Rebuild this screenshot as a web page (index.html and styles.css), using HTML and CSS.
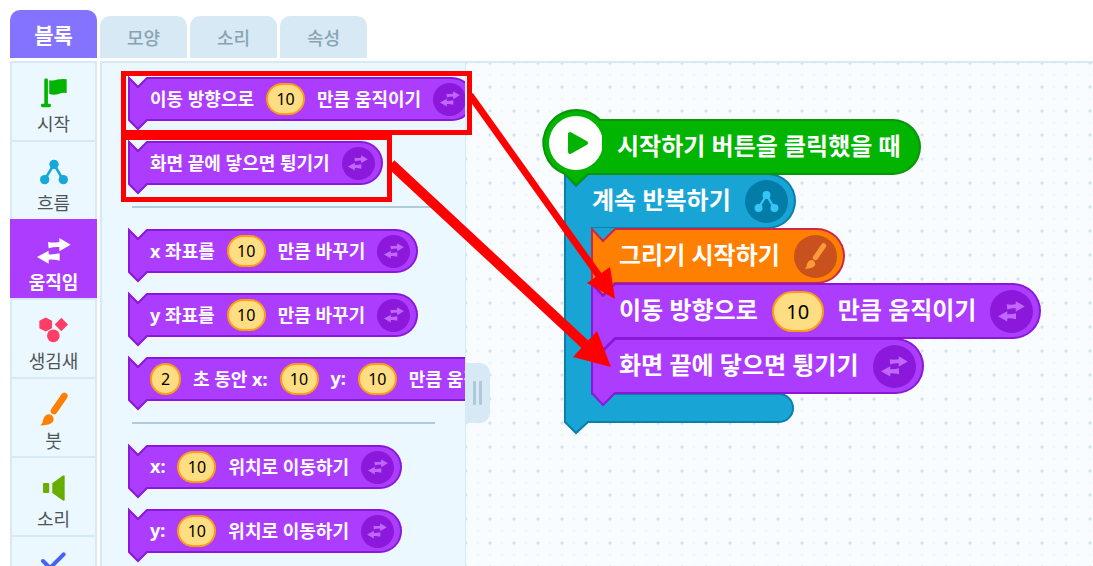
FILE: index.html
```html
<!DOCTYPE html>
<html lang="ko">
<head>
    <meta charset="UTF-8">
    <meta name="viewport" content="width=device-width, initial-scale=1.0">
    <title>블록 코딩</title>
    <link rel="stylesheet" href="styles.css">
</head>
<body>
    <!-- Shared shapes and icons -->
    <svg class="defs" aria-hidden="true">
        <symbol id="notch" viewBox="0 0 20 44" overflow="visible">
            <path d="M20 1H19L10 10L1 1V43L10 52L19 43H20"/>
        </symbol>
        <symbol id="notch-lg" viewBox="0 0 27 56" overflow="visible">
            <path d="M27 1H24L12 13L1 1V55L12 67L24 55H27"/>
        </symbol>
        <symbol id="loop-top" viewBox="0 0 27 56" overflow="visible">
            <path class="plain" d="M2 3L12 13L24 1H27V56H2z"/>
            <path class="edge" d="M27 1H24L12 13L1 1V56"/>
        </symbol>
        <symbol id="loop-end" viewBox="0 0 27 30" overflow="visible">
            <path d="M1 0V29L12 40L24 29H27"/>
            <path class="plain" d="M2 0H27V28H2z"/>
        </symbol>
        <symbol id="i-move" viewBox="0 0 102 78">
            <path d="M33 12Q48 15 67 12V0L101 20L67 40V27Q50 26 35 31z"/>
            <path d="M35 38L0 57L35 77V65Q50 64 68 68V46Q50 50 35 49z"/>
        </symbol>
        <symbol id="i-flow" viewBox="0 0 84 74">
            <path d="M14 60L42 14L69 60" fill="none" stroke="currentColor" stroke-width="8"/>
            <circle cx="42" cy="14" r="14"/>
            <circle cx="14" cy="60" r="14"/>
            <circle cx="70" cy="60" r="14"/>
        </symbol>
        <symbol id="i-brush" viewBox="0 0 84 100">
            <path d="M42 56L73 11" fill="none" stroke="currentColor" stroke-width="20" stroke-linecap="round"/>
            <path d="M0 99C8 95 8 88 10 80C14 64 32 61 38 72C47 86 36 101 0 99z"/>
        </symbol>
    </svg>

    <div class="app">
        <nav class="tabs">
            <button class="tab active">블록</button>
            <button class="tab">모양</button>
            <button class="tab">소리</button>
            <button class="tab">속성</button>
        </nav>

        <main class="editor">
            <!-- Categories -->
            <aside class="categories">
                <button class="category start">
                    <svg width="26" height="30" viewBox="0 0 79 88"><rect x="10" y="0" width="11" height="86" rx="4"/><rect x="0" y="77" width="30" height="10" rx="4"/><path d="M25 5Q38 8 50 3Q64 0 78 2V44Q66 42 53 47Q40 52 25 47z"/></svg>
                    <span>시작</span>
                </button>
                <button class="category flow">
                    <svg width="28" height="30"><use href="#i-flow"/></svg>
                    <span>흐름</span>
                </button>
                <button class="category move selected">
                    <svg width="34" height="30"><use href="#i-move"/></svg>
                    <span>움직임</span>
                </button>
                <button class="category looks">
                    <svg width="29" height="30" viewBox="0 0 87 75"><path d="M20 0L39 10V32L20 42L1 32V10zM67 1L87 21L67 41L47 21z"/><circle cx="43" cy="55" r="19"/></svg>
                    <span>생김새</span>
                </button>
                <button class="category brush">
                    <svg width="28" height="34"><use href="#i-brush"/></svg>
                    <span>붓</span>
                </button>
                <button class="category sound">
                    <svg width="22" height="30" viewBox="0 0 64 75"><rect x="0" y="23" width="18" height="29" rx="3"/><path d="M27 24L58 1Q63 -1 63 4V71Q63 76 58 74L27 52z"/></svg>
                    <span>소리</span>
                </button>
                <button class="category judge" aria-label="판단">
                    <svg width="26" height="24" viewBox="0 0 78 72"><path d="M6 27L27 48L68 7" fill="none" stroke="currentColor" stroke-width="12" stroke-linecap="round"/></svg>
                </button>
            </aside>

            <!-- Block list -->
            <section class="palette">
                <div class="group">
                    <div class="block">
                        <svg class="notch"><use href="#notch"/></svg>
                        <div class="body">
                            <span class="label">이동 방향으로</span><input class="value" value="10" aria-label="거리"><span class="label">만큼 움직이기</span>
                            <span class="badge"><svg><use href="#i-move"/></svg></span>
                        </div>
                    </div>
                    <div class="block">
                        <svg class="notch"><use href="#notch"/></svg>
                        <div class="body">
                            <span class="label">화면 끝에 닿으면 튕기기</span>
                            <span class="badge"><svg><use href="#i-move"/></svg></span>
                        </div>
                    </div>
                </div>
                <hr>
                <div class="group">
                    <div class="block">
                        <svg class="notch"><use href="#notch"/></svg>
                        <div class="body">
                            <span class="label">x 좌표를</span><input class="value" value="10" aria-label="x 변화"><span class="label">만큼 바꾸기</span>
                            <span class="badge"><svg><use href="#i-move"/></svg></span>
                        </div>
                    </div>
                    <div class="block">
                        <svg class="notch"><use href="#notch"/></svg>
                        <div class="body">
                            <span class="label">y 좌표를</span><input class="value" value="10" aria-label="y 변화"><span class="label">만큼 바꾸기</span>
                            <span class="badge"><svg><use href="#i-move"/></svg></span>
                        </div>
                    </div>
                    <div class="block">
                        <svg class="notch"><use href="#notch"/></svg>
                        <div class="body">
                            <input class="value short" value="2" aria-label="초"><span class="label">초 동안 x:</span><input class="value" value="10" aria-label="x"><span class="label">y:</span><input class="value" value="10" aria-label="y"><span class="label">만큼 움직이기</span>
                            <span class="badge"><svg><use href="#i-move"/></svg></span>
                        </div>
                    </div>
                </div>
                <hr>
                <div class="group">
                    <div class="block">
                        <svg class="notch"><use href="#notch"/></svg>
                        <div class="body">
                            <span class="label">x:</span><input class="value" value="10" aria-label="x 위치"><span class="label">위치로 이동하기</span>
                            <span class="badge"><svg><use href="#i-move"/></svg></span>
                        </div>
                    </div>
                    <div class="block">
                        <svg class="notch"><use href="#notch"/></svg>
                        <div class="body">
                            <span class="label">y:</span><input class="value" value="10" aria-label="y 위치"><span class="label">위치로 이동하기</span>
                            <span class="badge"><svg><use href="#i-move"/></svg></span>
                        </div>
                    </div>
                </div>
            </section>

            <!-- Workspace -->
            <section class="workspace">
                <button class="handle" aria-label="블록 목록 크기 조절"></button>

                <div class="program">
                    <div class="block event">
                        <svg class="play" viewBox="0 10 60 56">
                            <path d="M60 11H58A33 33 0 1 0 23 65L34 76L46 65H60"/>
                            <circle class="disc" cx="34" cy="34" r="27"/>
                            <path class="arrow" d="M28 25V43L44 34z"/>
                        </svg>
                        <div class="body"><span class="label">시작하기 버튼을 클릭했을 때</span></div>
                    </div>

                    <div class="loop">
                        <div class="block">
                            <svg class="notch"><use href="#loop-top"/></svg>
                            <div class="body">
                                <span class="label">계속 반복하기</span>
                                <span class="badge"><svg><use href="#i-flow"/></svg></span>
                            </div>
                        </div>
                        <div class="inner">
                            <div class="block draw">
                                <svg class="notch"><use href="#notch-lg"/></svg>
                                <div class="body">
                                    <span class="label">그리기 시작하기</span>
                                    <span class="badge"><svg><use href="#i-brush"/></svg></span>
                                </div>
                            </div>
                            <div class="block">
                                <svg class="notch"><use href="#notch-lg"/></svg>
                                <div class="body">
                                    <span class="label">이동 방향으로</span><input class="value" value="10" aria-label="이동 거리"><span class="label">만큼 움직이기</span>
                                    <span class="badge"><svg><use href="#i-move"/></svg></span>
                                </div>
                            </div>
                            <div class="block">
                                <svg class="notch"><use href="#notch-lg"/></svg>
                                <div class="body">
                                    <span class="label">화면 끝에 닿으면 튕기기</span>
                                    <span class="badge"><svg><use href="#i-move"/></svg></span>
                                </div>
                            </div>
                        </div>
                        <div class="loop-foot">
                            <svg class="notch"><use href="#loop-end"/></svg>
                            <div class="bar"></div>
                        </div>
                    </div>
                </div>
            </section>
        </main>

        <!-- Red guide boxes and arrows on top of the editor -->
        <svg class="guide" width="1093" height="566" aria-hidden="true">
            <rect x="123.5" y="73.5" width="346" height="59"/>
            <rect x="123.5" y="137.5" width="266" height="62"/>
            <path d="M470 95L602 280" stroke-width="7"/>
            <path d="M391 164L590 349" stroke-width="10"/>
            <path class="head" d="M615 299L587 283L610 267zM611 367L573 357L597 331z"/>
        </svg>
    </div>
</body>
</html>
```
FILE: styles.css
```css
* {
    margin: 0;
    padding: 0;
    box-sizing: border-box;
}

body {
    height: 100vh;
    overflow: hidden;
    background-color: #fff;
    font-family: "Noto Sans", "Noto Sans CJK KR", sans-serif;
}

button {
    border: none;
    font-family: inherit;
    cursor: pointer;
}

.defs {
    position: absolute;
    width: 0;
    height: 0;
}

.app {
    position: relative;
    height: 100%;
    padding: 10px 0 0 10px;
    display: flex;
    flex-direction: column;
    gap: 3px;
}

/* Tabs */
.tabs {
    height: 48px;
    display: flex;
    align-items: flex-end;
    gap: 3px;
}

.tab {
    width: 87px;
    height: 42px;
    border-radius: 10px 10px 0 0;
    background-color: #d6e9f4;
    color: #8aa3b1;
    font-size: 18px;
    font-weight: 500;
}

.tab.active {
    height: 48px;
    background-color: #8373ff;
    color: #fff;
    font-size: 21px;
    font-weight: bold;
}

.editor {
    flex: 1;
    min-height: 0;
    display: flex;
}

/* Categories */
.categories {
    width: 87px;
    flex-shrink: 0;
    margin-right: 3px;
    border: 2px solid #d6e9f4;
    border-bottom: none;
    background-color: #ebf8ff;
}

.category {
    width: 100%;
    height: 79px;
    padding-top: 15px;
    display: flex;
    flex-direction: column;
    align-items: center;
    border-bottom: 2px solid #d6e9f4;
    background-color: transparent;
    color: #4f5557;
    font-size: 18px;
    line-height: 32px;
}

.category svg {
    flex-shrink: 0;
    fill: currentColor;
}

.start svg { color: #00b400; }
.flow svg { color: #17a8d8; }
.looks svg { color: #ff3d66; }
.brush svg { color: #ff8000; }
.sound svg { color: #66ad00; }
.judge svg { color: #4562f5; }

.category.brush {
    padding-top: 13px;
    line-height: 30px;
}

.category.move {
    width: 87px;
    height: 81px;
    margin: -2px 0 0 -2px;
    padding-top: 17px;
    background-color: #ac3dff;
    color: #fff;
    font-weight: bold;
}

/* Block list */
.palette {
    width: 366px;
    flex-shrink: 0;
    padding: 14px 0 0 26px;
    overflow: hidden;
    border: solid #d6e9f4;
    border-width: 2px 1px 0 2px;
    background-color: #ebf8ff;
}

.palette hr {
    width: 303px;
    height: 2px;
    margin: 21px 0 21px 4px;
    border: none;
    background-color: #b1cbd9;
}

.group {
    display: flex;
    flex-direction: column;
    align-items: flex-start;
    gap: 20px;
}

/* Blocks */
.block {
    --fill: #ac3dff;
    --line: #8a18d6;
    --badge: #8b18db;
    --icon: #c067ff;
    height: 44px;
    display: flex;
    color: #fff;
    font-size: 18px;
    font-weight: bold;
    white-space: nowrap;
}

.notch {
    width: 20px;
    height: 44px;
    flex-shrink: 0;
    overflow: visible;
    fill: var(--fill);
    stroke: var(--line);
    stroke-width: 2;
}

.plain {
    stroke: none;
}

.edge {
    fill: none;
}

.body {
    flex-shrink: 0;
    padding: 0 6px 0 2px;
    display: flex;
    align-items: center;
    gap: 12px;
    border: 2px solid var(--line);
    border-left: none;
    border-radius: 0 22px 22px 0;
    background-color: var(--fill);
}

.label {
    padding-bottom: 2px;
}

.value {
    width: 39px;
    height: 32px;
    border: 2px solid #ff9c12;
    border-radius: 16px;
    background-color: #ffdd82;
    color: #000;
    font-family: inherit;
    font-size: 16px;
    text-align: center;
}

.value.short {
    width: 31px;
}

.badge {
    width: 33px;
    height: 33px;
    display: flex;
    align-items: center;
    justify-content: center;
    border-radius: 50%;
    background-color: var(--badge);
    color: var(--icon);
}

.badge svg {
    width: 20px;
    height: 16px;
    fill: currentColor;
}

/* Workspace */
.workspace {
    position: relative;
    flex: 1;
    min-width: 0;
    padding: 56px 0 0 98px;
    border-top: 2px solid #d6e9f4;
    background-color: #f8fcff;
    background-image:
        radial-gradient(circle, #d3e3ed 1px, transparent 2px),
        radial-gradient(circle, #f0f6fa 1px, transparent 2px);
    background-size: 24px 24px, 12px 12px;
    background-position: -12px -12px, -6px -6px;
}

.handle {
    position: absolute;
    top: 300px;
    left: 0;
    width: 24px;
    height: 60px;
    padding-right: 1px;
    display: flex;
    align-items: center;
    justify-content: center;
    gap: 3px;
    border-radius: 0 10px 10px 0;
    background-color: #d6e9f4;
}

.handle::before,
.handle::after {
    content: "";
    width: 3px;
    height: 24px;
    border-radius: 1px;
    background-color: #adc8d7;
}

.program {
    display: flex;
    flex-direction: column;
    align-items: flex-start;
}

.program .block {
    height: 56px;
    margin-bottom: -1px;
    font-size: 24px;
}

.program .notch {
    width: 27px;
    height: 56px;
}

.program .body {
    gap: 14px;
    padding: 0 6px 0 1px;
    border-radius: 0 28px 28px 0;
}

.program .label {
    padding-bottom: 6px;
}

.program .value {
    width: 52px;
    height: 41px;
    border-radius: 21px;
    font-size: 20px;
}

.program .badge {
    width: 43px;
    height: 43px;
}

.program .badge svg {
    width: 27px;
    height: 21px;
}

.program .draw .badge svg {
    height: 26px;
}

.program .event {
    --fill: #00b400;
    --line: #0a9409;
    position: relative;
    z-index: 1;
    margin: 0 0 -2px -22px;
}

.program .event .body {
    padding: 0 18px 0 15px;
}

.play {
    width: 60px;
    height: 56px;
    overflow: visible;
    fill: var(--fill);
    stroke: var(--line);
    stroke-width: 2;
}

.play .disc {
    fill: #fff;
    stroke: none;
}

.play .arrow {
    fill: #00b400;
    stroke: #00b400;
    stroke-width: 4;
    stroke-linejoin: round;
}

.loop {
    --fill: #18a5d5;
    --line: #0a7fa8;
}

.loop > .block {
    --fill: #18a5d5;
    --line: #0a7fa8;
    --badge: #037ca8;
    --icon: #36c5f7;
}

.program .draw {
    --fill: #ff8000;
    --line: #d0244a;
    --badge: #c9511d;
    --icon: #ff9a38;
}

.inner {
    position: relative;
    z-index: 1;
    display: flex;
    flex-direction: column;
    align-items: flex-start;
    padding-left: 25px;
    border-left: 2px solid var(--line);
    background: linear-gradient(var(--fill), var(--fill)) no-repeat 0 0 / 52px 100%;
}

.loop-foot {
    height: 30px;
    display: flex;
}

.loop-foot .notch {
    height: 30px;
}

.bar {
    width: 203px;
    border: 2px solid var(--line);
    border-left: none;
    border-radius: 0 15px 15px 0;
    background-color: var(--fill);
}

/* Guide */
.guide {
    position: absolute;
    top: 0;
    left: 0;
    z-index: 2;
    pointer-events: none;
    fill: none;
    stroke: #f00;
    stroke-width: 5;
}

.guide .head {
    fill: #f00;
    stroke: none;
}
```
